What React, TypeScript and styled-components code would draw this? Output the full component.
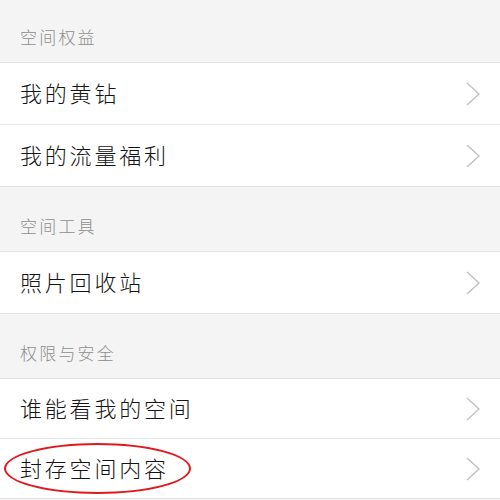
import React from "react";
import styled, { createGlobalStyle } from "styled-components";

const Global = createGlobalStyle`
  html, body { margin: 0; padding: 0; background: #f4f4f4; }
  body { font-family: "Noto Sans CJK SC", "Noto Sans", sans-serif; }
`;

const Page = styled.div`
  width: 500px;
  height: 500px;
  overflow: hidden;
  position: relative;
  background: #f4f4f4;
`;

const SectionHeader = styled.div<{ $h: number }>`
  height: ${(p) => p.$h}px;
  box-sizing: border-box;
  display: flex;
  align-items: flex-end;
  padding: 0 0 13px 20px;
  font-size: 17px;
  letter-spacing: 2.2px;
  color: #8e8e8e;
  font-weight: 300;
  border-bottom: 1px solid #e3e3e3;
`;

const Group = styled.div`
  background: #ffffff;
  border-bottom: 1px solid #e3e3e3;
`;

const Row = styled.div<{ $h: number }>`
  height: ${(p) => p.$h}px;
  box-sizing: border-box;
  display: flex;
  align-items: center;
  justify-content: space-between;
  padding: 0 20px 3px 20px;
  position: relative;
  & + & {
    border-top: 1px solid #e8e8e8;
  }
  & + &::before {
    content: "";
    position: absolute;
    top: -1px;
    left: 0;
    width: 17px;
    height: 1px;
    background: #ffffff;
  }
`;

const Label = styled.span`
  font-size: 22px;
  letter-spacing: 2.8px;
  color: #141414;
  font-weight: 300;
`;

const ChevronBox = styled.svg`
  margin-top: 3px;
  flex: none;
`;

const Chevron = () => (
  <ChevronBox width="14" height="24" viewBox="0 0 14 24">
    <polyline points="1,1 13,12 1,23" fill="none" stroke="#c2c2c2" strokeWidth="1.5" />
  </ChevronBox>
);

const Highlight = styled.div`
  position: absolute;
  left: 4px;
  top: 443px;
  width: 187px;
  height: 51px;
  border: 2px solid #e0191c;
  border-radius: 50%;
  box-sizing: border-box;
  pointer-events: none;
`;

const sections = [
  { title: "空间权益", h: 63, rows: [{ t: "我的黄钻", h: 61 }, { t: "我的流量福利", h: 62 }] },
  { title: "空间工具", h: 65, rows: [{ t: "照片回收站", h: 61 }] },
  { title: "权限与安全", h: 65, rows: [{ t: "谁能看我的空间", h: 59 }, { t: "封存空间内容", h: 60 }] },
];

export default function App() {
  return (
    <Page>
      <Global />
      {sections.map((s) => (
        <React.Fragment key={s.title}>
          <SectionHeader $h={s.h}>{s.title}</SectionHeader>
          <Group>
            {s.rows.map((r) => (
              <Row key={r.t} $h={r.h}>
                <Label>{r.t}</Label>
                <Chevron />
              </Row>
            ))}
          </Group>
        </React.Fragment>
      ))}
      <Highlight />
    </Page>
  );
}
